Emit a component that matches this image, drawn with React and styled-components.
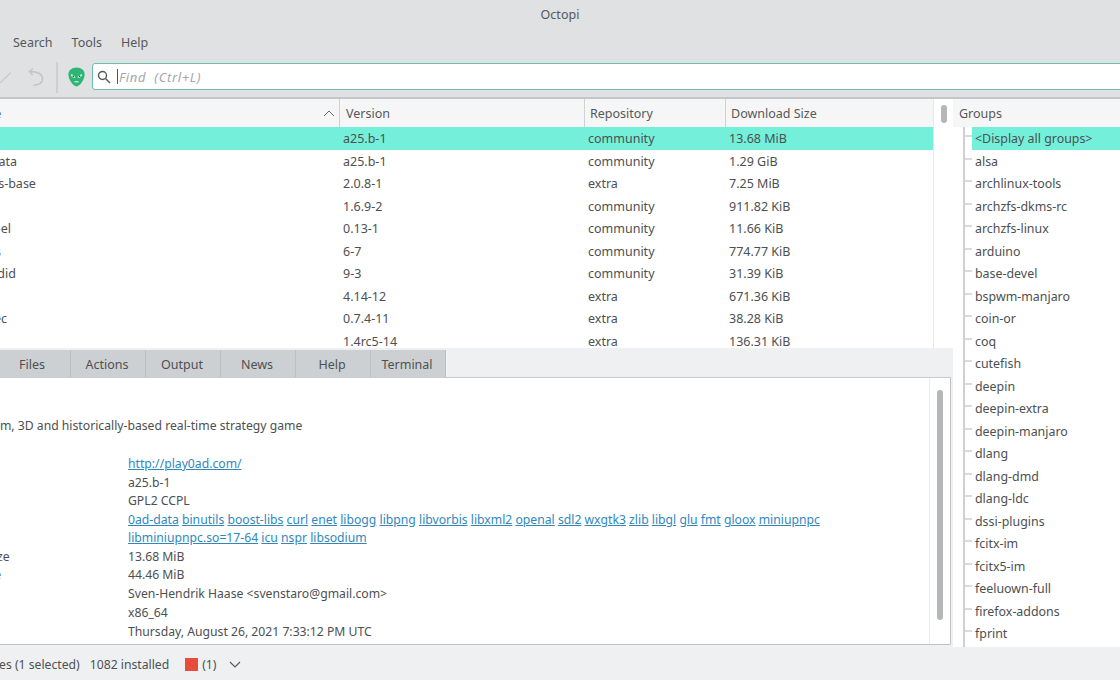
import React from 'react';
import styled, { createGlobalStyle } from 'styled-components';

const Global = createGlobalStyle`
  html, body { margin: 0; padding: 0; width: 1120px; height: 680px; overflow: hidden; background: #eff0f1; }
  body { font-family: "Noto Sans", "DejaVu Sans", sans-serif; font-size: 12.5px; color: #4d4f51; }
  * { box-sizing: border-box; }
`;

const Viewport = styled.div`
  width: 1120px;
  height: 680px;
  overflow: hidden;
`;
const Win = styled.div`
  width: 1320px;
  height: 680px;
  margin-left: -100px;
  display: flex;
  flex-direction: column;
`;
const TitleBar = styled.div`
  height: 28px;
  flex: none;
  background: #dfe1e3;
  display: flex;
  align-items: center;
  justify-content: center;
  color: #55585a;
`;
const MenuBar = styled.div`
  height: 28px;
  flex: none;
  background: #dfe1e3;
  display: flex;
  align-items: center;
  gap: 19px;
  padding-left: 113px;
`;
const MenuItem = styled.span`
  color: #55585a;
`;
const ToolBar = styled.div`
  height: 43px;
  flex: none;
  background: #dfe1e3;
  border-bottom: 2px solid #c3c5c7;
  padding: 7px 0 0 94px;
  display: flex;
  align-items: flex-start;
`;
const ToolSlot = styled.div`
  width: 22px;
  height: 27px;
  margin-right: ${p => p.$gap}px;
  display: flex;
  align-items: center;
  justify-content: center;
  flex: none;
`;
const ToolSep = styled.div`
  width: 2px;
  height: 31px;
  margin: -1px 7px 0 0;
  background: #cdcfd1;
  flex: none;
`;
const SearchBox = styled.div`
  flex: 1;
  height: 27px;
  background: #fff;
  border: 1px solid #6cbfa9;
  border-radius: 3px;
  display: flex;
  align-items: center;
  padding-left: 4px;
`;
const Caret = styled.span`
  width: 1px;
  height: 15px;
  background: #55585a;
  margin: 0 1px 0 6px;
`;
const Placeholder = styled.span`
  font-style: italic;
  font-size: 13px;
  letter-spacing: 0.65px;
  color: #a4a6a8;
  white-space: pre;
`;
const Body = styled.div`
  flex: none;
  height: 548px;
  display: flex;
`;
const LeftColumn = styled.div`
  width: 1053px;
  flex: none;
  display: flex;
  flex-direction: column;
`;
const TopPane = styled.div`
  height: 249px;
  flex: none;
  display: flex;
  background: #fff;
`;
const Table = styled.div`
  width: 1033px;
  flex: none;
  overflow: hidden;
`;
const Columns = styled.div`
  display: grid;
  grid-template-columns: 61px 379px 245px 141px 207px;
`;
const HeadRow = styled(Columns)`
  height: 28px;
  background: #f6f6f6;
`;
const HeadCell = styled.div`
  display: flex;
  align-items: center;
  justify-content: space-between;
  padding: 0 4px 0 ${p => p.$inset || 5}px;
  border-right: 1px solid ${p => (p.$last ? 'transparent' : '#cfd1d3')};
  color: #55585a;
`;
const Row = styled(Columns)`
  height: 22.5px;
  padding-top: 1px;
  align-items: center;
  background: ${p => (p.$selected ? '#74efd9' : '#fff')};
  color: #4d5052;
`;
const Cell = styled.div`
  padding-left: ${p => p.$inset || 3}px;
  white-space: nowrap;
`;
const ScrollTrack = styled.div`
  width: 20px;
  flex: none;
  border-left: 1px solid #e8e9ea;
  padding-top: 6px;
  display: flex;
  justify-content: center;
`;
const ThumbSmall = styled.div`
  width: 6px;
  height: 18px;
  border-radius: 3px;
  background: #b4b6b8;
`;
const TabBar = styled.div`
  height: 30px;
  flex: none;
  margin-right: 2px;
  padding: 2px 0 0 21px;
  display: flex;
  background: #eff0f1;
  border-bottom: 1px solid #c8cacc;
`;
const Tab = styled.div`
  width: 75px;
  padding: 1px 2px 0 0;
  display: flex;
  align-items: center;
  justify-content: center;
  background: ${p => (p.$active ? '#fff' : '#cdd0d2')};
  border-right: 1px solid #bcbfc1;
  color: #4d5052;
`;
const DetailPanel = styled.div`
  flex: 1;
  margin: 0 2px 2px 0;
  display: flex;
  background: #fff;
  border-right: 1px solid #bfc1c3;
  border-bottom: 1px solid #bfc1c3;
  border-bottom-right-radius: 2px;
  min-height: 0;
  font-size: 12.2px;
`;
const DetailText = styled.div`
  width: 1029px;
  flex: none;
  padding: 20.5px 0 0 26px;
  overflow: hidden;
`;
const DetailLine = styled.div`
  height: 18.8px;
  line-height: 18.8px;
  white-space: nowrap;
`;
const InfoRow = styled.div`
  display: grid;
  grid-template-columns: 202px 1fr;
  line-height: 18.8px;
  min-height: 18.8px;
`;
const DepsValue = styled.div`
  line-height: 17.5px;
  padding-bottom: 1.4px;
  width: 720px;
`;
const Link = styled.a`
  color: #2f88bd;
  text-decoration: underline;
`;
const DetailScroll = styled.div`
  width: 21px;
  flex: none;
  border-left: 1px solid #eceded;
  padding-top: 12px;
  display: flex;
  justify-content: center;
`;
const ThumbLong = styled.div`
  width: 6px;
  height: 230px;
  border-radius: 3px;
  background: #b4b6b8;
`;
const Groups = styled.div`
  flex: 1;
  background: #fff;
  overflow: hidden;
`;
const GroupsHead = styled.div`
  height: 28px;
  background: #f6f6f6;
  display: flex;
  align-items: center;
  padding-left: 6px;
  color: #55585a;
`;
const GroupRow = styled.div`
  height: 22.5px;
  margin-left: 10px;
  border-left: 2px solid #cfd0d2;
  display: flex;
  align-items: center;
  font-size: 12.4px;
`;
const Branch = styled.span`
  width: 7px;
  height: 2px;
  margin-top: -4px;
  background: #dadbdc;
  flex: none;
`;
const GroupLabel = styled.div`
  flex: 1;
  height: 100%;
  display: flex;
  align-items: center;
  padding: 1px 0 0 3px;
  background: ${p => (p.$selected ? '#74efd9' : 'transparent')};
`;
const StatusBar = styled.div`
  flex: 1;
  background: #eff0f1;
  display: flex;
  align-items: center;
  padding: 1px 0 0 20px;
  color: #4d5052;
  font-size: 12.2px;
`;
const StatusText = styled.span`
  margin-right: ${p => p.$gap}px;
  white-space: nowrap;
`;
const RedBox = styled.span`
  width: 13px;
  height: 13px;
  background: #e74c3c;
  margin-right: 4px;
`;
const StatusCount = styled.span`
  margin-right: 12px;
`;

const packages = [
  ['0ad', 'a25.b-1', 'community', '13.68 MiB'],
  ['0ad-data', 'a25.b-1', 'community', '1.29 GiB'],
  ['389-ds-base', '2.0.8-1', 'extra', '7.25 MiB'],
  ['4ti2', '1.6.9-2', 'community', '911.82 KiB'],
  ['acpid-el', '0.13-1', 'community', '11.66 KiB'],
  ['abbds', '6-7', 'community', '774.77 KiB'],
  ['a2jmidid', '9-3', 'community', '31.39 KiB'],
  ['a2ps', '4.14-12', 'extra', '671.36 KiB'],
  ['a52dec', '0.7.4-11', 'extra', '38.28 KiB'],
  ['aalib', '1.4rc5-14', 'extra', '136.31 KiB'],
];
const tabs = ['Info', 'Files', 'Actions', 'Output', 'News', 'Help', 'Terminal'];
const groups = ['<Display all groups>', 'alsa', 'archlinux-tools', 'archzfs-dkms-rc', 'archzfs-linux', 'arduino', 'base-devel', 'bspwm-manjaro', 'coin-or', 'coq', 'cutefish', 'deepin', 'deepin-extra', 'deepin-manjaro', 'dlang', 'dlang-dmd', 'dlang-ldc', 'dssi-plugins', 'fcitx-im', 'fcitx5-im', 'feeluown-full', 'firefox-addons', 'fprint', 'gnome'];
const deps = ['0ad-data', 'binutils', 'boost-libs', 'curl', 'enet', 'libogg', 'libpng', 'libvorbis', 'libxml2', 'openal', 'sdl2', 'wxgtk3', 'zlib', 'libgl', 'glu', 'fmt', 'gloox', 'miniupnpc', 'libminiupnpc.so=17-64', 'icu', 'nspr', 'libsodium'];
const infoAfter = [
  ['Download Size', '13.68 MiB'],
  ['Installed Size', '44.46 MiB'],
  ['Packager', 'Sven-Hendrik Haase <svenstaro@gmail.com>'],
  ['Architecture', 'x86_64'],
  ['Build Date', 'Thursday, August 26, 2021 7:33:12 PM UTC'],
];

const CheckIcon = () => (
  <svg width="22" height="22" viewBox="0 0 22 22" fill="none" stroke="#c9cbcd" strokeWidth="1.3">
    <path d="M6 17 L17 6.5" />
  </svg>
);
const UndoIcon = () => (
  <svg width="22" height="22" viewBox="0 0 22 22" fill="none" stroke="#c2c4c6" strokeWidth="1.4">
    <path d="M4.5 5.5 C10 5.5 17.5 7 17.5 13 C17.5 17 13 19 8.5 19.5" />
    <path d="M8 2.5 L4.5 5.5 L7.5 9" />
  </svg>
);
const AlienIcon = () => (
  <svg width="17" height="20" viewBox="0 0 17 20">
    <path d="M8.5 .5 C13.4 .5 16.6 3.4 16.6 7.6 C16.6 12.6 11.8 19.5 8.5 19.5 C5.2 19.5 .4 12.6 .4 7.6 C.4 3.4 3.6 .5 8.5 .5 Z" fill="#2bb673" />
    <path d="M2.8 7.2 C5 7.2 7 8.6 7.4 10.8 C5 11 3 9.6 2.8 7.2 Z M14.2 7.2 C12 7.2 10 8.6 9.6 10.8 C12 11 14 9.6 14.2 7.2 Z" fill="#e6f5ec" />
    <circle cx="5.4" cy="9.2" r="0.9" fill="#1c7d4e" />
    <circle cx="11.6" cy="9.2" r="0.9" fill="#1c7d4e" />
    <path d="M6.4 14.8 H10.6" stroke="#e6f5ec" strokeWidth="1.1" />
  </svg>
);
const SearchIcon = () => (
  <svg width="14" height="14" viewBox="0 0 14 14" fill="none" stroke="#55585a" strokeWidth="1.4">
    <circle cx="5.5" cy="5.5" r="4" />
    <path d="M8.5 8.5 L13 13" />
  </svg>
);
const SortIcon = () => (
  <svg width="12" height="7" viewBox="0 0 12 7" fill="none" stroke="#66696b" strokeWidth="1">
    <path d="M1 6 L6 1 L11 6" />
  </svg>
);
const ChevronDown = () => (
  <svg width="12" height="7" viewBox="0 0 12 7" fill="none" stroke="#55585a" strokeWidth="1.1">
    <path d="M1 1 L6 6 L11 1" />
  </svg>
);

export default function App() {
  return (
    <Viewport>
      <Global />
      <Win>
        <TitleBar>Octopi</TitleBar>
        <MenuBar>
          <MenuItem>Search</MenuItem>
          <MenuItem>Tools</MenuItem>
          <MenuItem>Help</MenuItem>
        </MenuBar>
        <ToolBar>
          <ToolSlot $gap={9}><CheckIcon /></ToolSlot>
          <ToolSlot $gap={9}><UndoIcon /></ToolSlot>
          <ToolSep />
          <ToolSlot $gap={5}><AlienIcon /></ToolSlot>
          <SearchBox>
            <SearchIcon />
            <Caret />
            <Placeholder>Find  (Ctrl+L)</Placeholder>
          </SearchBox>
        </ToolBar>
        <Body>
          <LeftColumn>
            <TopPane>
              <Table>
                <HeadRow>
                  <HeadCell />
                  <HeadCell>Name<SortIcon /></HeadCell>
                  <HeadCell $inset={6}>Version</HeadCell>
                  <HeadCell>Repository</HeadCell>
                  <HeadCell $last>Download Size</HeadCell>
                </HeadRow>
                {packages.map((p, i) => (
                  <Row key={p[0]} $selected={i === 0}>
                    <Cell />
                    {p.map((v, j) => <Cell key={v} $inset={j === 0 ? 4 : 3}>{v}</Cell>)}
                  </Row>
                ))}
              </Table>
              <ScrollTrack><ThumbSmall /></ScrollTrack>
            </TopPane>
            <TabBar>
              {tabs.map((t, i) => <Tab key={t} $active={i === 0}>{t}</Tab>)}
            </TabBar>
            <DetailPanel>
              <DetailText>
                <DetailLine>0 A.D.</DetailLine>
                <DetailLine>Cross-platform, 3D and historically-based real-time strategy game</DetailLine>
                <DetailLine />
                <InfoRow><div>URL</div><div><Link>http://play0ad.com/</Link></div></InfoRow>
                <InfoRow><div>Version</div><div>a25.b-1</div></InfoRow>
                <InfoRow><div>Licenses</div><div>GPL2 CCPL</div></InfoRow>
                <InfoRow>
                  <div>Depends On</div>
                  <DepsValue>
                    {deps.map(d => <React.Fragment key={d}><Link>{d}</Link>{' '}</React.Fragment>)}
                  </DepsValue>
                </InfoRow>
                {infoAfter.map(([k, v]) => (
                  <InfoRow key={k}><div>{k}</div><div>{v}</div></InfoRow>
                ))}
              </DetailText>
              <DetailScroll><ThumbLong /></DetailScroll>
            </DetailPanel>
          </LeftColumn>
          <Groups>
            <GroupsHead>Groups</GroupsHead>
            {groups.map((g, i) => (
              <GroupRow key={g}>
                <Branch />
                <GroupLabel $selected={i === 0}>{g}</GroupLabel>
              </GroupRow>
            ))}
          </Groups>
        </Body>
        <StatusBar>
          <StatusText $gap={10}>10938 packages (1 selected)</StatusText>
          <StatusText $gap={16}>1082 installed</StatusText>
          <RedBox />
          <StatusCount>(1)</StatusCount>
          <ChevronDown />
        </StatusBar>
      </Win>
    </Viewport>
  );
}
